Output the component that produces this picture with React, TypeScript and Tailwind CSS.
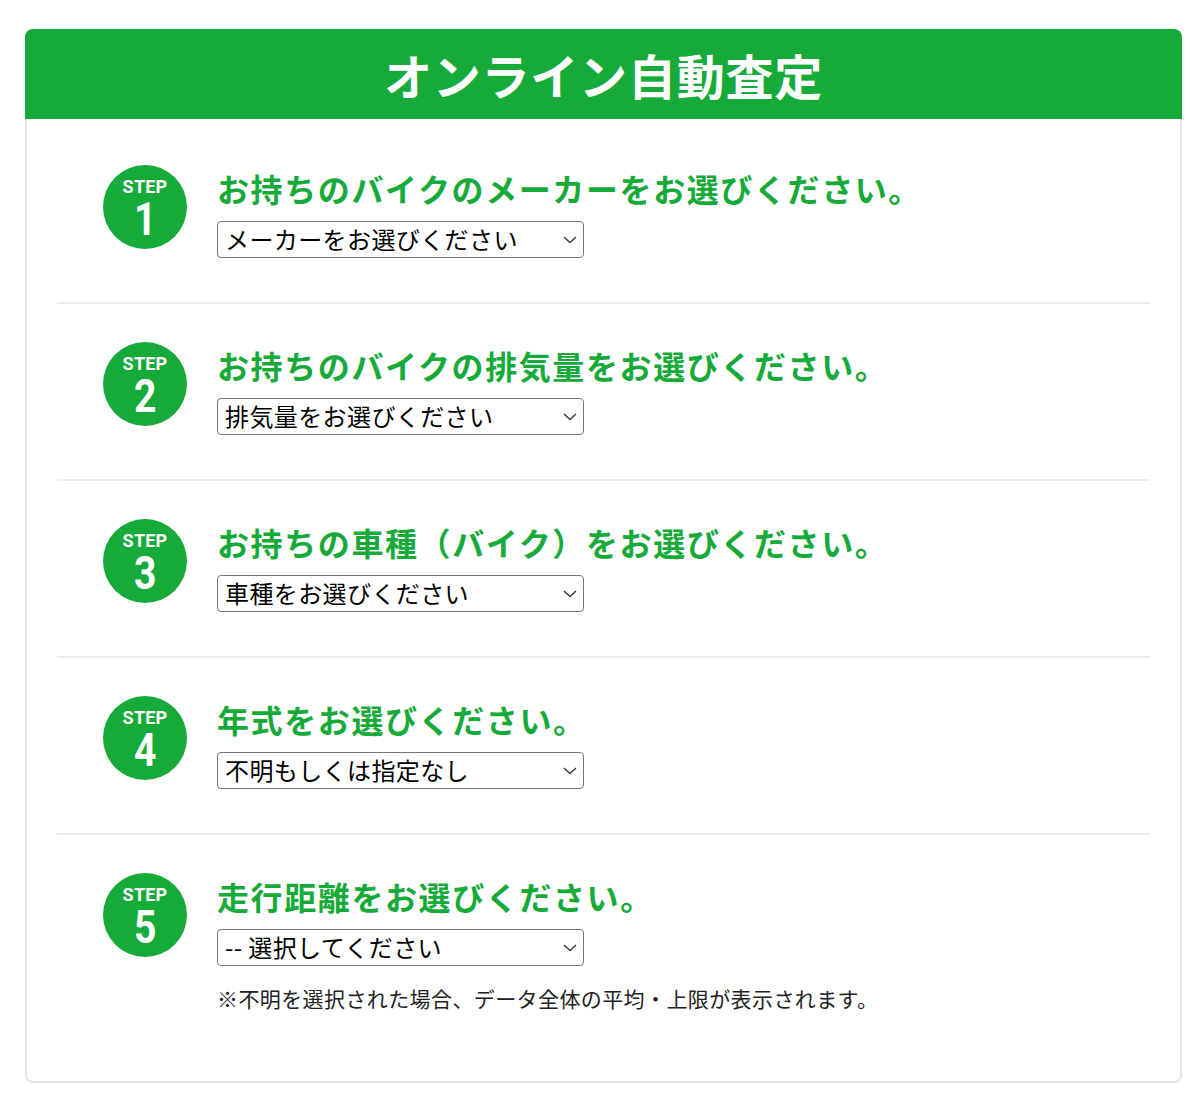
import React from "react";

const steps = [
  { n: "1", title: "お持ちのバイクのメーカーをお選びください。", placeholder: "メーカーをお選びください" },
  { n: "2", title: "お持ちのバイクの排気量をお選びください。", placeholder: "排気量をお選びください" },
  { n: "3", title: "お持ちの車種（バイク）をお選びください。", placeholder: "車種をお選びください" },
  { n: "4", title: "年式をお選びください。", placeholder: "不明もしくは指定なし" },
  { n: "5", title: "走行距離をお選びください。", placeholder: "-- 選択してください" },
];

const jp = { fontFamily: '"Noto Sans CJK JP", "Noto Sans", sans-serif' };

function Chevron() {
  return (
    <svg
      className="pointer-events-none absolute right-[7px] top-[15px]"
      width="14"
      height="8"
      viewBox="0 0 14 8"
      fill="none"
    >
      <polyline points="1,1 7,6.5 13,1" stroke="#3a3a3a" strokeWidth="1.4" fill="none" />
    </svg>
  );
}

export default function App() {
  return (
    <div className="min-h-[1107px] bg-white pt-[29px]" style={jp}>
      <div className="ml-[25px] w-[1157px]">
        <div className="flex h-[90px] items-center justify-center rounded-t-[8px] bg-[#16ab39]">
          <h1 className="text-[48px] font-bold leading-none tracking-[0.8px] text-white">オンライン自動査定</h1>
        </div>
        <div className="rounded-b-[8px] border-2 border-t-0 border-[#e3e3e3] px-[30px] pt-[8px]">
          {steps.map((s, i) => {
            const last = i === steps.length - 1;
            return (
              <div
                key={s.n}
                className={
                  last
                    ? "flex items-start gap-[30px] pl-[46px] pt-[38px] pb-[67px]"
                    : "flex items-start gap-[30px] border-b-2 border-[#ececec] pl-[46px] pt-[38px] pb-[44px]"
                }
              >
                <div className="flex h-[84px] w-[84px] shrink-0 flex-col items-center rounded-full bg-[#16ab39] pt-[14px] text-white">
                  <span
                    className="text-[18px] font-bold leading-[16px] tracking-[0.2px]"
                    style={{ fontFamily: "Roboto, sans-serif" }}
                  >
                    STEP
                  </span>
                  <span
                    className="mt-[5px] inline-block scale-x-[0.85] text-[46px] font-bold leading-[38px]"
                    style={{ fontFamily: "Roboto, sans-serif" }}
                  >
                    {s.n}
                  </span>
                </div>
                <div className="mt-[3px] flex flex-col">
                  <h2 className="text-[32px] font-bold leading-[40px] tracking-[1.6px] text-[#16ab39]">{s.title}</h2>
                  <div className="relative mt-[13px] h-[37px] w-[367px]">
                    <select
                      className="h-[37px] w-[367px] appearance-none rounded-[4px] border border-[#767676] bg-white pb-[2px] pl-[7px] text-[24px] leading-[31px] tracking-[0.4px] text-black"
                      style={jp}
                      defaultValue=""
                    >
                      <option value="">{s.placeholder}</option>
                    </select>
                    <Chevron />
                  </div>
                  {last && (
                    <p className="mt-[17px] text-[21px] leading-[31px] tracking-[0.4px] text-[#222]">
                      ※不明を選択された場合、データ全体の平均・上限が表示されます。
                    </p>
                  )}
                </div>
              </div>
            );
          })}
        </div>
      </div>
    </div>
  );
}
